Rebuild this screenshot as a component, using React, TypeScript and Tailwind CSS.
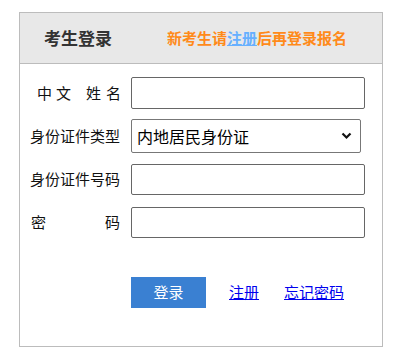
import { useState } from "react";

const font = "font-['Microsoft_YaHei','Noto_Sans_CJK_SC',sans-serif]";

const Field = ({ label, children }: { label: React.ReactNode; children: React.ReactNode }) => (
  <div className="flex items-center">
    <div className="w-[100px] shrink-0 whitespace-nowrap text-[15px] text-[#111]">{label}</div>
    <div className="ml-[11px]">{children}</div>
  </div>
);

const inputCls =
  "block w-[234px] border border-[#666] rounded-[2px] bg-white px-1 text-[15px] outline-none";

export default function App() {
  const [idType, setIdType] = useState("内地居民身份证");

  return (
    <div className={`${font} pt-[12px] pl-[19px]`}>
      <div className="w-[364px] h-[335px] border border-[#bcbcbc] bg-white">
        <div className="h-[51px] flex items-center bg-[#e8e8e8] border-b border-[#bcbcbc]">
          <span className="ml-[24px] text-[17px] font-bold text-[#333]">考生登录</span>
          <span className="ml-[55px] text-[15px] font-bold text-[#ff8a1a]">
            新考生请<a href="#" className="text-[#66b0ff] underline">注册</a>后再登录报名
          </span>
        </div>

        <div className="pt-[13px]">
          <Field
            label={
              <span className="flex">
                <span className="ml-[17px]">中</span>
                <span className="ml-[4px]">文</span>
                <span className="ml-[15px]">姓</span>
                <span className="ml-[5px]">名</span>
              </span>
            }
          >
            <input className={`${inputCls} h-[32px]`} />
          </Field>

          <div className="mt-[10px]">
            <Field label={<span className="block text-right -ml-[2px]">身份证件类型</span>}>
              <div className="relative w-[230px]">
                <select
                  value={idType}
                  onChange={(e) => setIdType(e.target.value)}
                  className="block w-[230px] h-[34px] appearance-none border border-[#777] rounded-[2px] bg-white pl-[5px] text-[16px] text-black outline-none"
                >
                  <option>内地居民身份证</option>
                  <option>港澳居民来往内地通行证</option>
                  <option>台湾居民来往大陆通行证</option>
                  <option>护照</option>
                </select>
                <svg
                  className="pointer-events-none absolute right-[9px] top-[13px]"
                  width="11"
                  height="8"
                  viewBox="0 0 11 8"
                >
                  <path d="M1.5 1.5 L5.5 5.5 L9.5 1.5" fill="none" stroke="#111" strokeWidth="2.2" />
                </svg>
              </div>
            </Field>
          </div>

          <div className="mt-[11px]">
            <Field label={<span className="block text-right -ml-[2px]">身份证件号码</span>}>
              <input className={`${inputCls} h-[31px]`} />
            </Field>
          </div>

          <div className="mt-[12px]">
            <Field
              label={
                <span className="flex justify-between pl-[11px]">
                  <span>密</span>
                  <span>码</span>
                </span>
              }
            >
              <input type="password" className={`${inputCls} h-[31px]`} />
            </Field>
          </div>

          <div className="mt-[39px] flex items-center pl-[111px]">
            <button className="w-[75px] h-[31px] bg-[#3a80d2] text-white text-[15px]">登录</button>
            <a href="#" className="ml-[23px] text-[15px] text-[#0000ee] underline">注册</a>
            <a href="#" className="ml-[25px] text-[15px] text-[#0000ee] underline">忘记密码</a>
          </div>
        </div>
      </div>
    </div>
  );
}
